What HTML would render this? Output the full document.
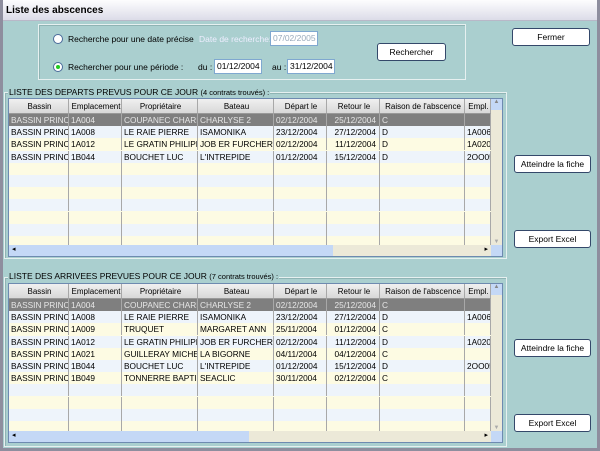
<!DOCTYPE html>
<html><head><meta charset="utf-8"><style>
*{box-sizing:border-box;margin:0;padding:0}
body{width:600px;height:451px;overflow:hidden;font-family:"Liberation Sans",sans-serif;font-size:8.5px;color:#000;background:#8e8e9e;position:relative}
.win{position:absolute;left:0;top:0;width:600px;height:451px;background:#aacfcf}
.frame{position:absolute;left:0;top:0;width:600px;height:451px;border:3px solid #8e8e9e;border-top:none;pointer-events:none}
.title{position:absolute;left:0;top:0;width:600px;height:21px;background:linear-gradient(#fdfdfe,#dcdce8);border-bottom:1px solid #b8b8c8;font-weight:bold;font-size:10px;padding:5px 6px}
.abs{position:absolute;white-space:nowrap}
.grp{position:absolute;border:1px solid #e6f0f0;box-shadow:inset 1px 1px 0 #8fb4b4}
.btn{position:absolute;background:#fff;border:1px solid #34486a;border-radius:3px;text-align:center;font-size:8.5px;line-height:16px}
.inp{position:absolute;background:#fff;border:1px solid #7fa8d0;height:15px;font-size:8.5px;line-height:13px;padding-left:2px;white-space:nowrap;overflow:hidden}
.radio{position:absolute;width:10px;height:10px;border-radius:50%;background:#fff;border:1px solid #4a6b9a}
.grid{position:absolute;background:#fdfbe3;border:1px solid #6e8ab0;overflow:hidden}
.row{position:absolute;left:0;height:12px;white-space:nowrap}
.c{position:absolute;top:0;height:100%;border-right:1px solid #a8a8a8;padding-left:2px;overflow:hidden;font-size:8.3px;line-height:12px}
.h .c{background:linear-gradient(#f0f0f0,#d8d8d8);border-bottom:1px solid #999;text-align:center;font-size:8px;line-height:15px}
.sel{background:#7f7f7f;color:#e6e6e6}
.b{background:#eef4fb}.y{background:#fdfbe3}
.vs{position:absolute;right:0;background:#ece9d8;width:11px}
.hs{position:absolute;left:0;height:12px;background:#ece9d8}
</style></head><body>
<div class="win">
<div class="title">Liste des abscences</div>
<div class="grp" style="left:38px;top:24px;width:428px;height:56px"></div>
<div class="radio" style="left:53px;top:34px"></div>
<div class="abs" style="left:68px;top:34px">Recherche pour une date précise</div>
<div class="abs" style="left:199px;top:34px;color:#eef">Date de recherche:</div>
<div class="inp" style="left:270px;top:31px;width:48px;color:#9ab">07/02/2005</div>
<div class="radio" style="left:53px;top:62px"><div style="width:4px;height:4px;border-radius:50%;background:#2c2;margin:2px"></div></div>
<div class="abs" style="left:68px;top:62px">Rechercher pour une période :</div>
<div class="abs" style="left:198px;top:62px">du :</div>
<div class="inp" style="left:214px;top:59px;width:48px">01/12/2004</div>
<div class="abs" style="left:272px;top:62px">au :</div>
<div class="inp" style="left:287px;top:59px;width:48px">31/12/2004</div>
<div class="btn" style="left:377px;top:43px;width:69px;height:18px">Rechercher</div>
<div class="btn" style="left:512px;top:28px;width:78px;height:18px">Fermer</div>

<div class="grp" style="left:4px;top:92px;width:503px;height:167px"></div>
<div class="abs" style="left:8px;top:87px;background:#aacfcf;padding:0 1px">LISTE DES DEPARTS PREVUS POUR CE JOUR <span style="font-size:7.5px">(4 contrats trouvés) :</span></div>
<div class="grid" style="left:8px;top:98px;width:495px;height:159px" id="g1"></div>

<div class="grp" style="left:4px;top:277px;width:503px;height:170px"></div>
<div class="abs" style="left:8px;top:271px;background:#aacfcf;padding:0 1px">LISTE DES ARRIVEES PREVUES POUR CE JOUR <span style="font-size:7.5px">(7 contrats trouvés) :</span></div>
<div class="grid" style="left:8px;top:283px;width:495px;height:160px" id="g2"></div>

<div class="btn" style="left:514px;top:155px;width:77px;height:18px">Atteindre la fiche</div>
<div class="btn" style="left:514px;top:230px;width:77px;height:18px">Export Excel</div>
<div class="btn" style="left:514px;top:339px;width:77px;height:18px">Atteindre la fiche</div>
<div class="btn" style="left:514px;top:414px;width:77px;height:18px">Export Excel</div>
</div>
<div class="frame"></div>
<script>
var W=[0,60,113,189,265,318,371,456,482];
var H=["Bassin","Emplacement","Propriétaire","Bateau","Départ le","Retour le","Raison de l'abscence","Empl."];
function grid(id,data,h,rows){
 var g=document.getElementById(id),s='';
 s+='<div class="row h" style="top:0;height:15px;width:482px">';
 for(var i=0;i<8;i++)s+='<div class="c" style="left:'+W[i]+'px;width:'+(W[i+1]-W[i])+'px">'+H[i]+'</div>';
 s+='</div>';
 for(var r=0;r<rows;r++){
  var cls=r==0&&data.length?'sel':(r%2?'b':'y');
  var d=data[r]||['','','','','','','',''];
  s+='<div class="row '+cls+'" style="top:'+(15+r*12.2)+'px;width:482px">';
  for(var i=0;i<8;i++)s+='<div class="c" style="left:'+W[i]+'px;width:'+(W[i+1]-W[i])+'px;text-align:'+(i==5?'right;padding-right:3px':'left')+'">'+d[i]+'</div>';
  s+='</div>';
 }
 s+='<div class="vs" style="top:0;height:'+(h-13)+'px"><div style="height:11px;background:#c4d8f6;font-size:6px;text-align:center;color:#888">▲</div><div style="position:absolute;bottom:0;width:11px;font-size:6px;text-align:center;color:#aaa">▼</div></div>';
 s+='<div class="hs" style="top:'+(h-13)+'px;width:482px"><div style="position:absolute;left:0;top:0;width:'+(id=="g1"?324:240)+'px;height:12px;background:#c4d8f6;font-size:7px;padding-left:3px">◂</div><div style="position:absolute;right:3px;font-size:7px">▸</div></div>';
 s+='<div style="position:absolute;right:0;top:'+(h-13)+'px;width:11px;height:12px;background:#c4d8f6"></div>';
 g.innerHTML=s;
}
grid('g1',[
["BASSIN PRINC","1A004","COUPANEC CHARL","CHARLYSE 2","02/12/2004","25/12/2004","C",""],
["BASSIN PRINC","1A008","LE RAIE PIERRE","ISAMONIKA","23/12/2004","27/12/2004","D","1A006"],
["BASSIN PRINC","1A012","LE GRATIN PHILIPP","JOB ER FURCHER","02/12/2004","11/12/2004","D","1A020"],
["BASSIN PRINC","1B044","BOUCHET LUC","L'INTREPIDE","01/12/2004","15/12/2004","D","2OO05"]],159,11);
grid('g2',[
["BASSIN PRINC","1A004","COUPANEC CHARL","CHARLYSE 2","02/12/2004","25/12/2004","C",""],
["BASSIN PRINC","1A008","LE RAIE PIERRE","ISAMONIKA","23/12/2004","27/12/2004","D","1A006"],
["BASSIN PRINC","1A009","TRUQUET","MARGARET ANN","25/11/2004","01/12/2004","C",""],
["BASSIN PRINC","1A012","LE GRATIN PHILIPP","JOB ER FURCHER","02/12/2004","11/12/2004","D","1A020"],
["BASSIN PRINC","1A021","GUILLERAY MICHE","LA BIGORNE","04/11/2004","04/12/2004","C",""],
["BASSIN PRINC","1B044","BOUCHET LUC","L'INTREPIDE","01/12/2004","15/12/2004","D","2OO05"],
["BASSIN PRINC","1B049","TONNERRE BAPTIS","SEACLIC","30/11/2004","02/12/2004","C",""]],160,11);
</script>
</body></html>
